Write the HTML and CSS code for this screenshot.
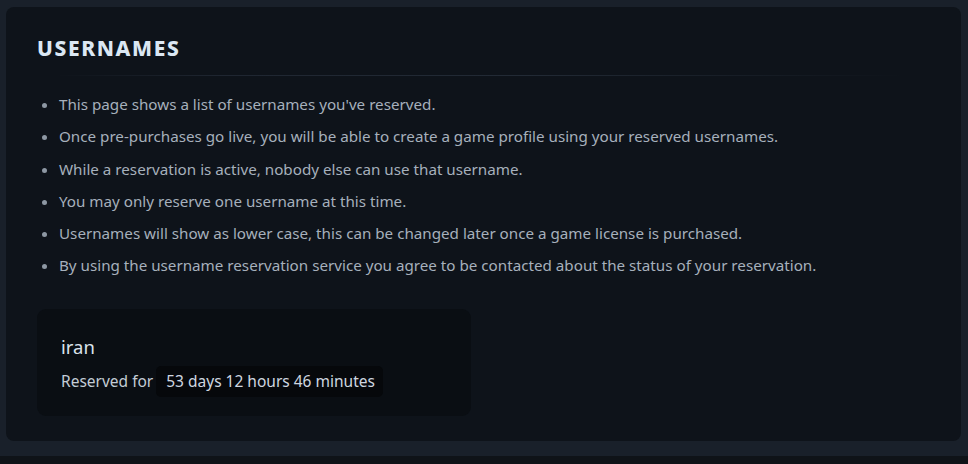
FILE: index.html
```html
<!DOCTYPE html>
<html>
<head>
<meta charset="utf-8">
<link rel="stylesheet" href="styles.css">
</head>
<body>
<div class="page">
  <section class="panel">
    <h1 class="title">USERNAMES</h1>
    <div class="divider"></div>
    <ul class="notes">
      <li>This page shows a list of usernames you've reserved.</li>
      <li>Once pre-purchases go live, you will be able to create a game profile using your reserved usernames.</li>
      <li>While a reservation is active, nobody else can use that username.</li>
      <li>You may only reserve one username at this time.</li>
      <li>Usernames will show as lower case, this can be changed later once a game license is purchased.</li>
      <li>By using the username reservation service you agree to be contacted about the status of your reservation.</li>
    </ul>
    <div class="reservation">
      <div class="name">iran</div>
      <div class="meta">
        <span class="label">Reserved for</span>
        <span class="badge">53 days 12 hours 46 minutes</span>
      </div>
    </div>
  </section>
</div>
<div class="footer-strip"></div>
</body>
</html>
```
FILE: styles.css
```css
html, body {
  margin: 0;
  padding: 0;
  background: #19202a;
  font-family: "Noto Sans", "Open Sans", sans-serif;
  height: 464px;
  overflow: hidden;
}
.page {
  padding: 7px 7px 15px 6px;
}
.panel {
  background: #0e131a;
  border-radius: 8px;
  height: 434px;
  box-sizing: border-box;
  padding: 28px 31px 0 31px;
}
.title {
  margin: 0;
  font-size: 21px;
  font-weight: 800;
  letter-spacing: 1.6px;
  color: #dbe7f3;
  line-height: 26px;
}
.divider {
  height: 1px;
  margin: 14px 25px 0 18px;
  background: linear-gradient(90deg, rgba(40,48,60,0) 0%, #1f2631 20%, #222a35 55%, rgba(30,38,48,0) 100%);
}
.notes {
  margin: 12px 0 0 0;
  padding: 0 0 0 22px;
  color: #a6b0bc;
  font-size: 15.2px;
  line-height: 32.3px;
}
.notes li::marker {
  color: #8d97a3;
}
.reservation {
  margin-top: 27px;
  width: 434px;
  height: 107px;
  box-sizing: border-box;
  background: #0a0e13;
  border-radius: 9px;
  padding: 25px 24px 0 24px;
}
.name {
  font-size: 18.5px;
  color: #dbe3ec;
  line-height: 26px;
}
.meta {
  display: flex;
  align-items: center;
  gap: 3px;
  margin-top: 6px;
  font-size: 15.5px;
  color: #c3ccd6;
}
.badge {
  background: #06080b;
  border-radius: 5px;
  padding: 4px 8px 5px 10px;
  color: #cfd7e0;
}
.footer-strip {
  position: absolute;
  left: 0;
  right: 0;
  top: 456px;
  height: 8px;
  background: #0f1318;
}
```
